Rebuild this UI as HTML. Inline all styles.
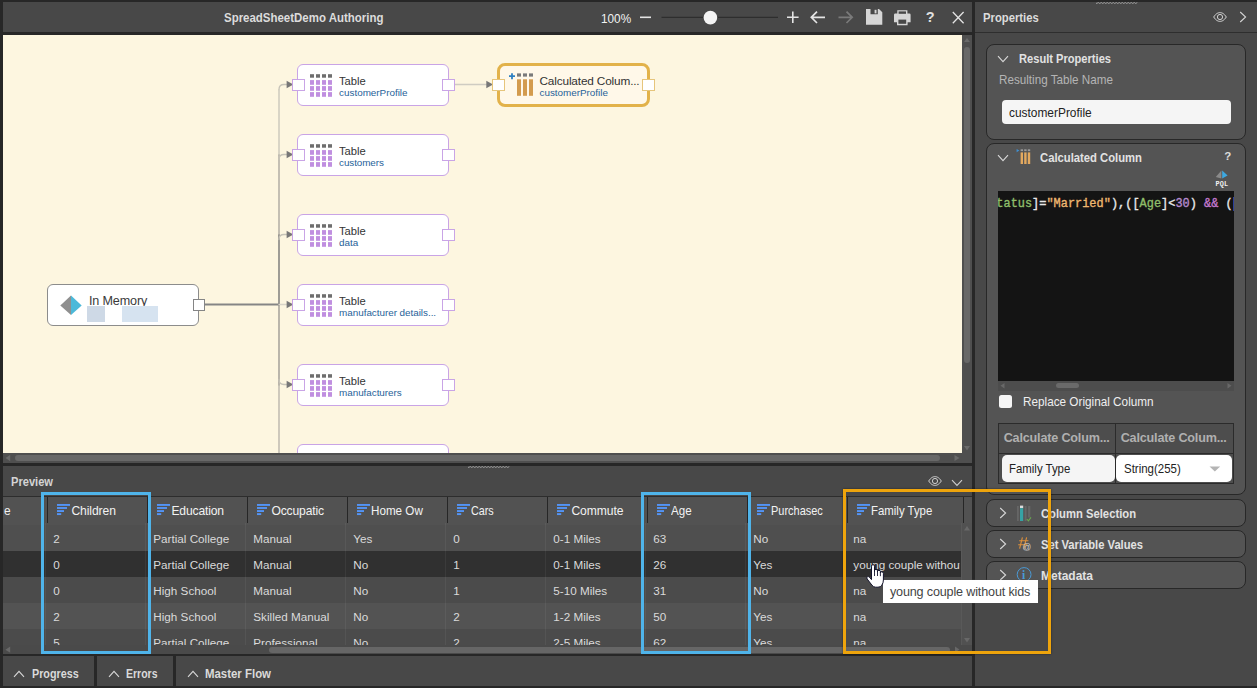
<!DOCTYPE html>
<html lang="en"><head><meta charset="utf-8"><title>SpreadSheetDemo Authoring</title>
<style>
*{box-sizing:border-box;margin:0;padding:0}
html,body{width:1257px;height:688px;overflow:hidden;background:#272727}
body{position:relative;font-family:"Liberation Sans",sans-serif;font-size:12px;color:#ddd}
.a,.t,svg{position:absolute}
.t{white-space:pre;line-height:20px;height:20px}
.panel{background:#484848}
.node{background:#fff;border:1px solid #c9a4e6;border-radius:6px}
.port{background:#fff;border:1px solid #c9a4e6}
.card{background:#545454;border:1px solid #282828;border-radius:8px}
</style></head>
<body>
<div class="a panel" style="left:3px;top:2px;width:969px;height:30px;"></div>
<span class="t" style="left:224.0px;top:8px;font-size:12.6px;font-weight:bold;transform:scaleX(0.9100);transform-origin:0 50%;color:#dcdcdc;">SpreadSheetDemo Authoring</span>
<span class="t" style="left:600.9px;top:9px;font-size:12.7px;transform:scaleX(0.9275);transform-origin:0 50%;color:#f2f2f2;">100%</span>
<svg style="left:590px;top:2px" width="382" height="30" viewBox="590 2 382 30" fill="none" stroke="#e4e4e4" stroke-width="1.6">
<path d="M640 17.3H651"/>
<path d="M661.5 17.3H778" stroke="#2e2e2e" stroke-width="1.2"/>
<circle cx="710.4" cy="17.6" r="6.8" fill="#f4f4f4" stroke="none"/>
<path d="M787 17.3H798.6M792.8 11.5V23.1"/>
<path d="M825 17.3H811.5M817 11.6L811.3 17.3L817 23" stroke-width="1.7"/>
<path d="M838.5 17.3H852M846.5 11.6L852.2 17.3L846.5 23" stroke="#7a7a7a" stroke-width="1.7"/>
<path d="M866 9H879L882.3 12.3V24.8H866Z M870.5 9V14.3H877.8V9Z M876.2 9.8V13.2" fill="#d6d6d6" stroke="none" fill-rule="evenodd"/>
<rect x="874.6" y="9.8" width="1.9" height="3.6" fill="#d6d6d6" stroke="none"/>
<path d="M897.3 10.2H907.4V13.4H909.3Q910.6 13.4 910.6 14.7V22.2H907.6V25.2H897V22.2H894V14.7Q894 13.4 895.3 13.4H897.3Z" fill="#d6d6d6" stroke="none"/>
<rect x="898.6" y="11.4" width="7.4" height="2.4" fill="#484848" stroke="none"/>
<rect x="898.4" y="19.6" width="7.8" height="4.2" fill="#484848" stroke="none"/>
<path d="M952.8 12L963.6 23.2M963.6 12L952.8 23.2" stroke-width="1.3"/>
</svg>
<span class="t" style="left:925.8px;top:7px;font-size:14.5px;font-weight:bold;color:#e0e0e0;">?</span>
<div class="a" style="left:3px;top:35px;width:959px;height:418px;background:#fdf6e0"></div>
<div class="a" style="left:962px;top:35px;width:10px;height:428px;background:#4f4f4f"></div>
<div class="a" style="left:3px;top:453px;width:969px;height:10px;background:#4f4f4f"></div>
<div class="a" style="left:964px;top:47px;width:6px;height:316px;background:#686868;border-radius:3px"></div>
<div class="a" style="left:15px;top:455px;width:925px;height:6px;background:#686868;border-radius:3px"></div>
<svg style="left:0;top:0" width="1257" height="688" fill="#6a6a6a">
<path d="M964 42L967 38L970 42Z"/><path d="M964 446L970 446L967 450.5Z"/>
<path d="M10.2 454.8L5.6 458L10.2 461.2Z"/><path d="M954.5 455L959.5 458L954.5 461Z"/>
</svg>
<svg style="left:3px;top:35px" width="959" height="418" viewBox="3 35 959 418" fill="none" stroke-linecap="round"><path d="M279 90V155" stroke="#c6c3b8" stroke-width="1.3"/><path d="M279 155V235" stroke="#b0ada4" stroke-width="1.5"/><path d="M279 235V304" stroke="#8e8c88" stroke-width="1.7"/><path d="M279 305V385" stroke="#a9a69e" stroke-width="1.6"/><path d="M279 385V453" stroke="#b9b6ac" stroke-width="1.4"/><path d="M204.5 304.5H279" stroke="#858585" stroke-width="2"/><path d="M279 89.5Q279 84.5 284 84.5H287" stroke="#c6c3b8" stroke-width="1.3"/><path d="M286.6 80.8L293.40000000000003 84.5L286.6 88.2Z" fill="#777" stroke="none"/><path d="M279 159.5Q279 154.5 284 154.5H287" stroke="#c6c3b8" stroke-width="1.3"/><path d="M286.6 150.8L293.40000000000003 154.5L286.6 158.2Z" fill="#777" stroke="none"/><path d="M279 239.5Q279 234.5 284 234.5H287" stroke="#c6c3b8" stroke-width="1.3"/><path d="M286.6 230.8L293.40000000000003 234.5L286.6 238.2Z" fill="#777" stroke="none"/><path d="M279 304.5H287" stroke="#d8d4c8" stroke-width="1.3"/><path d="M286.6 300.8L293.40000000000003 304.5L286.6 308.2Z" fill="#777" stroke="none"/><path d="M279 379.5Q279 384.5 284 384.5H287" stroke="#c6c3b8" stroke-width="1.3"/><path d="M286.6 380.8L293.40000000000003 384.5L286.6 388.2Z" fill="#777" stroke="none"/><path d="M454.5 84.5H487" stroke="#cfccc2" stroke-width="1.3"/><path d="M486.3 80.8L493.1 84.5L486.3 88.2Z" fill="#777" stroke="none"/></svg>
<div class="a node" style="left:297px;top:64px;width:152px;height:42px;"></div><div class="a port" style="left:292px;top:79px;width:13px;height:12px;"></div><div class="a port" style="left:442px;top:79px;width:13px;height:12px;"></div><svg style="left:310px;top:74px" width="22" height="23" viewBox="0 0 22 23"><rect x="0" y="0.2" width="4" height="3.5" fill="#6e6e6e"/><rect x="0" y="6.1" width="4" height="4.7" fill="#c08fe0"/><rect x="0" y="12.1" width="4" height="4.7" fill="#c08fe0"/><rect x="0" y="18.1" width="4" height="4.7" fill="#c08fe0"/><rect x="6" y="0.2" width="4" height="3.5" fill="#6e6e6e"/><rect x="6" y="6.1" width="4" height="4.7" fill="#c08fe0"/><rect x="6" y="12.1" width="4" height="4.7" fill="#c08fe0"/><rect x="6" y="18.1" width="4" height="4.7" fill="#c08fe0"/><rect x="12" y="0.2" width="4" height="3.5" fill="#6e6e6e"/><rect x="12" y="6.1" width="4" height="4.7" fill="#c08fe0"/><rect x="12" y="12.1" width="4" height="4.7" fill="#c08fe0"/><rect x="12" y="18.1" width="4" height="4.7" fill="#c08fe0"/><rect x="18" y="0.2" width="4" height="3.5" fill="#6e6e6e"/><rect x="18" y="6.1" width="4" height="4.7" fill="#c08fe0"/><rect x="18" y="12.1" width="4" height="4.7" fill="#c08fe0"/><rect x="18" y="18.1" width="4" height="4.7" fill="#c08fe0"/></svg><span class="t" style="left:338.9px;top:71px;font-size:11.8px;transform:scaleX(0.9502);transform-origin:0 50%;color:#333;">Table</span><span class="t" style="left:339.1px;top:83px;font-size:9.9px;letter-spacing:-0.014px;color:#1f6299;">customerProfile</span>
<div class="a node" style="left:297px;top:134px;width:152px;height:42px;"></div><div class="a port" style="left:292px;top:149px;width:13px;height:12px;"></div><div class="a port" style="left:442px;top:149px;width:13px;height:12px;"></div><svg style="left:310px;top:144px" width="22" height="23" viewBox="0 0 22 23"><rect x="0" y="0.2" width="4" height="3.5" fill="#6e6e6e"/><rect x="0" y="6.1" width="4" height="4.7" fill="#c08fe0"/><rect x="0" y="12.1" width="4" height="4.7" fill="#c08fe0"/><rect x="0" y="18.1" width="4" height="4.7" fill="#c08fe0"/><rect x="6" y="0.2" width="4" height="3.5" fill="#6e6e6e"/><rect x="6" y="6.1" width="4" height="4.7" fill="#c08fe0"/><rect x="6" y="12.1" width="4" height="4.7" fill="#c08fe0"/><rect x="6" y="18.1" width="4" height="4.7" fill="#c08fe0"/><rect x="12" y="0.2" width="4" height="3.5" fill="#6e6e6e"/><rect x="12" y="6.1" width="4" height="4.7" fill="#c08fe0"/><rect x="12" y="12.1" width="4" height="4.7" fill="#c08fe0"/><rect x="12" y="18.1" width="4" height="4.7" fill="#c08fe0"/><rect x="18" y="0.2" width="4" height="3.5" fill="#6e6e6e"/><rect x="18" y="6.1" width="4" height="4.7" fill="#c08fe0"/><rect x="18" y="12.1" width="4" height="4.7" fill="#c08fe0"/><rect x="18" y="18.1" width="4" height="4.7" fill="#c08fe0"/></svg><span class="t" style="left:338.9px;top:141px;font-size:11.8px;transform:scaleX(0.9502);transform-origin:0 50%;color:#333;">Table</span><span class="t" style="left:339.1px;top:153px;font-size:9.9px;letter-spacing:-0.094px;color:#1f6299;">customers</span>
<div class="a node" style="left:297px;top:214px;width:152px;height:42px;"></div><div class="a port" style="left:292px;top:229px;width:13px;height:12px;"></div><div class="a port" style="left:442px;top:229px;width:13px;height:12px;"></div><svg style="left:310px;top:224px" width="22" height="23" viewBox="0 0 22 23"><rect x="0" y="0.2" width="4" height="3.5" fill="#6e6e6e"/><rect x="0" y="6.1" width="4" height="4.7" fill="#c08fe0"/><rect x="0" y="12.1" width="4" height="4.7" fill="#c08fe0"/><rect x="0" y="18.1" width="4" height="4.7" fill="#c08fe0"/><rect x="6" y="0.2" width="4" height="3.5" fill="#6e6e6e"/><rect x="6" y="6.1" width="4" height="4.7" fill="#c08fe0"/><rect x="6" y="12.1" width="4" height="4.7" fill="#c08fe0"/><rect x="6" y="18.1" width="4" height="4.7" fill="#c08fe0"/><rect x="12" y="0.2" width="4" height="3.5" fill="#6e6e6e"/><rect x="12" y="6.1" width="4" height="4.7" fill="#c08fe0"/><rect x="12" y="12.1" width="4" height="4.7" fill="#c08fe0"/><rect x="12" y="18.1" width="4" height="4.7" fill="#c08fe0"/><rect x="18" y="0.2" width="4" height="3.5" fill="#6e6e6e"/><rect x="18" y="6.1" width="4" height="4.7" fill="#c08fe0"/><rect x="18" y="12.1" width="4" height="4.7" fill="#c08fe0"/><rect x="18" y="18.1" width="4" height="4.7" fill="#c08fe0"/></svg><span class="t" style="left:338.9px;top:221px;font-size:11.8px;transform:scaleX(0.9502);transform-origin:0 50%;color:#333;">Table</span><span class="t" style="left:339.1px;top:233px;font-size:9.9px;letter-spacing:-0.009px;color:#1f6299;">data</span>
<div class="a node" style="left:297px;top:284px;width:152px;height:42px;"></div><div class="a port" style="left:292px;top:299px;width:13px;height:12px;"></div><div class="a port" style="left:442px;top:299px;width:13px;height:12px;"></div><svg style="left:310px;top:294px" width="22" height="23" viewBox="0 0 22 23"><rect x="0" y="0.2" width="4" height="3.5" fill="#6e6e6e"/><rect x="0" y="6.1" width="4" height="4.7" fill="#c08fe0"/><rect x="0" y="12.1" width="4" height="4.7" fill="#c08fe0"/><rect x="0" y="18.1" width="4" height="4.7" fill="#c08fe0"/><rect x="6" y="0.2" width="4" height="3.5" fill="#6e6e6e"/><rect x="6" y="6.1" width="4" height="4.7" fill="#c08fe0"/><rect x="6" y="12.1" width="4" height="4.7" fill="#c08fe0"/><rect x="6" y="18.1" width="4" height="4.7" fill="#c08fe0"/><rect x="12" y="0.2" width="4" height="3.5" fill="#6e6e6e"/><rect x="12" y="6.1" width="4" height="4.7" fill="#c08fe0"/><rect x="12" y="12.1" width="4" height="4.7" fill="#c08fe0"/><rect x="12" y="18.1" width="4" height="4.7" fill="#c08fe0"/><rect x="18" y="0.2" width="4" height="3.5" fill="#6e6e6e"/><rect x="18" y="6.1" width="4" height="4.7" fill="#c08fe0"/><rect x="18" y="12.1" width="4" height="4.7" fill="#c08fe0"/><rect x="18" y="18.1" width="4" height="4.7" fill="#c08fe0"/></svg><span class="t" style="left:338.9px;top:291px;font-size:11.8px;transform:scaleX(0.9502);transform-origin:0 50%;color:#333;">Table</span><span class="t" style="left:339.1px;top:303px;font-size:9.9px;letter-spacing:-0.031px;color:#1f6299;">manufacturer details...</span>
<div class="a node" style="left:297px;top:364px;width:152px;height:42px;"></div><div class="a port" style="left:292px;top:379px;width:13px;height:12px;"></div><div class="a port" style="left:442px;top:379px;width:13px;height:12px;"></div><svg style="left:310px;top:374px" width="22" height="23" viewBox="0 0 22 23"><rect x="0" y="0.2" width="4" height="3.5" fill="#6e6e6e"/><rect x="0" y="6.1" width="4" height="4.7" fill="#c08fe0"/><rect x="0" y="12.1" width="4" height="4.7" fill="#c08fe0"/><rect x="0" y="18.1" width="4" height="4.7" fill="#c08fe0"/><rect x="6" y="0.2" width="4" height="3.5" fill="#6e6e6e"/><rect x="6" y="6.1" width="4" height="4.7" fill="#c08fe0"/><rect x="6" y="12.1" width="4" height="4.7" fill="#c08fe0"/><rect x="6" y="18.1" width="4" height="4.7" fill="#c08fe0"/><rect x="12" y="0.2" width="4" height="3.5" fill="#6e6e6e"/><rect x="12" y="6.1" width="4" height="4.7" fill="#c08fe0"/><rect x="12" y="12.1" width="4" height="4.7" fill="#c08fe0"/><rect x="12" y="18.1" width="4" height="4.7" fill="#c08fe0"/><rect x="18" y="0.2" width="4" height="3.5" fill="#6e6e6e"/><rect x="18" y="6.1" width="4" height="4.7" fill="#c08fe0"/><rect x="18" y="12.1" width="4" height="4.7" fill="#c08fe0"/><rect x="18" y="18.1" width="4" height="4.7" fill="#c08fe0"/></svg><span class="t" style="left:338.9px;top:371px;font-size:11.8px;transform:scaleX(0.9502);transform-origin:0 50%;color:#333;">Table</span><span class="t" style="left:339.1px;top:383px;font-size:9.9px;letter-spacing:-0.048px;color:#1f6299;">manufacturers</span>
<div class="a" style="left:3px;top:35px;width:959px;height:418px;overflow:hidden"><div class="a node" style="left:294px;top:409px;width:152px;height:42px;"></div></div>
<div class="a node" style="left:47px;top:284px;width:152px;height:42px;border-color:#8c8c8c"></div>
<div class="a port" style="left:192.5px;top:299px;width:12px;height:12px;border-color:#858585"></div>
<svg style="left:60px;top:295px" width="22" height="21" viewBox="0 0 22 21"><path d="M11 0.5L0.3 10.5L11 20Z" fill="#8f8f8f"/><path d="M11 0.5L21.7 10.5L11 20Z" fill="#4cb9d9"/></svg>
<span class="t" style="left:88.9px;top:291px;font-size:12.6px;letter-spacing:-0.143px;color:#3a3a3a;">In Memory</span>
<div class="a" style="left:87px;top:306px;width:18px;height:16px;background:#ceD9e6"></div>
<div class="a" style="left:122px;top:306px;width:36px;height:16px;background:#d6e3f0"></div>
<div class="a" style="left:496.5px;top:63px;width:153px;height:44px;background:#fff8e9;border:3px solid #e2b24a;border-radius:8px"></div>
<div class="a port" style="left:492px;top:79px;width:13px;height:12px;border-color:#e6c57c"></div>
<div class="a port" style="left:642px;top:79px;width:13px;height:12px;border-color:#e6c57c"></div>
<svg style="left:508px;top:72px" width="26" height="25" viewBox="508 72 26 25">
<path d="M509 76.2H515M512 73.2V79.2" stroke="#2f80c2" stroke-width="1.8" fill="none"/>
<rect x="517" y="73.4" width="4" height="3.2" fill="#7a7a7a"/><rect x="523" y="73.4" width="4" height="3.2" fill="#7a7a7a"/><rect x="529" y="73.4" width="4" height="3.2" fill="#7a7a7a"/>
<rect x="517" y="79.3" width="4" height="16.5" fill="#d39b4e"/><rect x="523" y="79.3" width="4" height="16.5" fill="#d39b4e"/><rect x="529" y="79.3" width="4" height="16.5" fill="#d39b4e"/>
</svg>
<span class="t" style="left:539.5px;top:71px;font-size:11.8px;letter-spacing:-0.155px;color:#333;">Calculated Colum...</span>
<span class="t" style="left:539.5px;top:83px;font-size:9.9px;letter-spacing:-0.014px;color:#1f6299;">customerProfile</span>
<div class="a panel" style="left:3px;top:466px;width:969px;height:188px;"></div>
<span class="t" style="left:11.2px;top:472px;font-size:12.6px;font-weight:bold;transform:scaleX(0.8822);transform-origin:0 50%;color:#d4d4d4;">Preview</span>
<svg style="left:468px;top:465px" width="42" height="4" viewBox="0 0 42 4"><path d="M0 1.5 L0.75 3L2.25 1L3.75 3L5.25 1L6.75 3L8.25 1L9.75 3L11.25 1L12.75 3L14.25 1L15.75 3L17.25 1L18.75 3L20.25 1L21.75 3L23.25 1L24.75 3L26.25 1L27.75 3L29.25 1L30.75 3L32.25 1L33.75 3L35.25 1L36.75 3L38.25 1L39.75 3L41.25 1" stroke="#9a9a9a" stroke-width="0.8" fill="none"/></svg>
<svg style="left:928px;top:476px" width="14" height="10" viewBox="0 0 14 10" fill="none" stroke="#cfcfcf" stroke-width="1"><path d="M0.7 5C3 1.4 5.3 0.6 7 0.6S11 1.4 13.3 5C11 8.6 8.7 9.4 7 9.4S3 8.6 0.7 5Z"/><circle cx="7" cy="5" r="2.6"/></svg>
<svg style="left:951px;top:479px" width="12" height="8" viewBox="0 0 12 8" fill="none" stroke="#cfcfcf" stroke-width="1.1"><path d="M1 1.2L6 6.4L11 1.2"/></svg>
<div class="a" style="left:3px;top:496px;width:969px;height:149px;overflow:hidden"><div class="a" style="left:0;top:0;width:969px;height:29px;background:#525252;border-top:1px solid #2d2d2d"></div><div class="a" style="left:0;top:29px;width:958px;height:26px;background:#4f4f4f"></div><div class="a" style="left:0;top:55px;width:958px;height:26px;background:#303030"></div><div class="a" style="left:0;top:81px;width:958px;height:26px;background:#4b4b4b"></div><div class="a" style="left:0;top:107px;width:958px;height:26px;background:#535353"></div><div class="a" style="left:0;top:133px;width:958px;height:16px;background:#4b4b4b"></div><div class="a" style="left:44px;top:1px;width:1px;height:26px;background:#262626"></div><div class="a" style="left:42px;top:27px;width:1px;height:122px;background:rgba(255,255,255,0.055)"></div><div class="a" style="left:144px;top:1px;width:1px;height:26px;background:#262626"></div><div class="a" style="left:142px;top:27px;width:1px;height:122px;background:rgba(255,255,255,0.055)"></div><div class="a" style="left:244px;top:1px;width:1px;height:26px;background:#262626"></div><div class="a" style="left:242px;top:27px;width:1px;height:122px;background:rgba(255,255,255,0.055)"></div><div class="a" style="left:344px;top:1px;width:1px;height:26px;background:#262626"></div><div class="a" style="left:342px;top:27px;width:1px;height:122px;background:rgba(255,255,255,0.055)"></div><div class="a" style="left:444px;top:1px;width:1px;height:26px;background:#262626"></div><div class="a" style="left:442px;top:27px;width:1px;height:122px;background:rgba(255,255,255,0.055)"></div><div class="a" style="left:544px;top:1px;width:1px;height:26px;background:#262626"></div><div class="a" style="left:542px;top:27px;width:1px;height:122px;background:rgba(255,255,255,0.055)"></div><div class="a" style="left:644px;top:1px;width:1px;height:26px;background:#262626"></div><div class="a" style="left:642px;top:27px;width:1px;height:122px;background:rgba(255,255,255,0.055)"></div><div class="a" style="left:744px;top:1px;width:1px;height:26px;background:#262626"></div><div class="a" style="left:742px;top:27px;width:1px;height:122px;background:rgba(255,255,255,0.055)"></div><div class="a" style="left:844px;top:1px;width:1px;height:26px;background:#262626"></div><div class="a" style="left:842px;top:27px;width:1px;height:122px;background:rgba(255,255,255,0.055)"></div></div>
<div class="a" style="left:963px;top:497px;width:1px;height:26px;background:#262626"></div>
<svg style="left:57px;top:504px" width="14" height="12" viewBox="0 0 14 12" fill="#5394f6"><rect x="0" y="0" width="13" height="1.9"/><rect x="0" y="3.05" width="10" height="1.9"/><rect x="0" y="6.1" width="7" height="1.9"/><rect x="0" y="9.15" width="4.2" height="1.9"/></svg>
<span class="t" style="left:71.4px;top:501px;font-size:12.1px;letter-spacing:-0.068px;color:#f2f2f2;">Children</span>
<svg style="left:157px;top:504px" width="14" height="12" viewBox="0 0 14 12" fill="#5394f6"><rect x="0" y="0" width="13" height="1.9"/><rect x="0" y="3.05" width="10" height="1.9"/><rect x="0" y="6.1" width="7" height="1.9"/><rect x="0" y="9.15" width="4.2" height="1.9"/></svg>
<span class="t" style="left:171.4px;top:501px;font-size:12.1px;letter-spacing:-0.144px;color:#f2f2f2;">Education</span>
<svg style="left:257px;top:504px" width="14" height="12" viewBox="0 0 14 12" fill="#5394f6"><rect x="0" y="0" width="13" height="1.9"/><rect x="0" y="3.05" width="10" height="1.9"/><rect x="0" y="6.1" width="7" height="1.9"/><rect x="0" y="9.15" width="4.2" height="1.9"/></svg>
<span class="t" style="left:271.4px;top:501px;font-size:12.1px;letter-spacing:-0.142px;color:#f2f2f2;">Occupatic</span>
<svg style="left:357px;top:504px" width="14" height="12" viewBox="0 0 14 12" fill="#5394f6"><rect x="0" y="0" width="13" height="1.9"/><rect x="0" y="3.05" width="10" height="1.9"/><rect x="0" y="6.1" width="7" height="1.9"/><rect x="0" y="9.15" width="4.2" height="1.9"/></svg>
<span class="t" style="left:371.4px;top:501px;font-size:12.1px;transform:scaleX(0.9634);transform-origin:0 50%;color:#f2f2f2;">Home Ow</span>
<svg style="left:457px;top:504px" width="14" height="12" viewBox="0 0 14 12" fill="#5394f6"><rect x="0" y="0" width="13" height="1.9"/><rect x="0" y="3.05" width="10" height="1.9"/><rect x="0" y="6.1" width="7" height="1.9"/><rect x="0" y="9.15" width="4.2" height="1.9"/></svg>
<span class="t" style="left:471.4px;top:501px;font-size:12.1px;transform:scaleX(0.8886);transform-origin:0 50%;color:#f2f2f2;">Cars</span>
<svg style="left:557px;top:504px" width="14" height="12" viewBox="0 0 14 12" fill="#5394f6"><rect x="0" y="0" width="13" height="1.9"/><rect x="0" y="3.05" width="10" height="1.9"/><rect x="0" y="6.1" width="7" height="1.9"/><rect x="0" y="9.15" width="4.2" height="1.9"/></svg>
<span class="t" style="left:571.4px;top:501px;font-size:12.1px;letter-spacing:-0.060px;color:#f2f2f2;">Commute</span>
<svg style="left:657px;top:504px" width="14" height="12" viewBox="0 0 14 12" fill="#5394f6"><rect x="0" y="0" width="13" height="1.9"/><rect x="0" y="3.05" width="10" height="1.9"/><rect x="0" y="6.1" width="7" height="1.9"/><rect x="0" y="9.15" width="4.2" height="1.9"/></svg>
<span class="t" style="left:671.4px;top:501px;font-size:12.1px;transform:scaleX(0.9567);transform-origin:0 50%;color:#f2f2f2;">Age</span>
<svg style="left:757px;top:504px" width="14" height="12" viewBox="0 0 14 12" fill="#5394f6"><rect x="0" y="0" width="13" height="1.9"/><rect x="0" y="3.05" width="10" height="1.9"/><rect x="0" y="6.1" width="7" height="1.9"/><rect x="0" y="9.15" width="4.2" height="1.9"/></svg>
<span class="t" style="left:771.4px;top:501px;font-size:12.1px;transform:scaleX(0.9065);transform-origin:0 50%;color:#f2f2f2;">Purchasec</span>
<svg style="left:857px;top:504px" width="14" height="12" viewBox="0 0 14 12" fill="#5394f6"><rect x="0" y="0" width="13" height="1.9"/><rect x="0" y="3.05" width="10" height="1.9"/><rect x="0" y="6.1" width="7" height="1.9"/><rect x="0" y="9.15" width="4.2" height="1.9"/></svg>
<span class="t" style="left:871.4px;top:501px;font-size:12.1px;transform:scaleX(0.9435);transform-origin:0 50%;color:#f2f2f2;">Family Type</span>
<span class="t" style="left:4.0px;top:501px;font-size:11.9px;color:#f0f0f0;">e</span>
<div class="a" style="left:3px;top:523px;width:958px;height:122px;overflow:hidden"><div class="a" style="left:47px;top:0;width:93px;height:122px;overflow:hidden"><span class="t" style="left:3.3px;top:6px;font-size:11.7px;color:#dadada;">2</span></div><div class="a" style="left:147px;top:0;width:93px;height:122px;overflow:hidden"><span class="t" style="left:3.3px;top:6px;font-size:11.7px;color:#dadada;">Partial College</span></div><div class="a" style="left:247px;top:0;width:93px;height:122px;overflow:hidden"><span class="t" style="left:3.3px;top:6px;font-size:11.7px;color:#dadada;">Manual</span></div><div class="a" style="left:347px;top:0;width:93px;height:122px;overflow:hidden"><span class="t" style="left:3.3px;top:6px;font-size:11.7px;color:#dadada;">Yes</span></div><div class="a" style="left:447px;top:0;width:93px;height:122px;overflow:hidden"><span class="t" style="left:3.3px;top:6px;font-size:11.7px;color:#dadada;">0</span></div><div class="a" style="left:547px;top:0;width:93px;height:122px;overflow:hidden"><span class="t" style="left:3.3px;top:6px;font-size:11.7px;color:#dadada;">0-1 Miles</span></div><div class="a" style="left:647px;top:0;width:93px;height:122px;overflow:hidden"><span class="t" style="left:3.3px;top:6px;font-size:11.7px;color:#dadada;">63</span></div><div class="a" style="left:747px;top:0;width:93px;height:122px;overflow:hidden"><span class="t" style="left:3.3px;top:6px;font-size:11.7px;color:#dadada;">No</span></div><div class="a" style="left:847px;top:0;width:110px;height:122px;overflow:hidden"><span class="t" style="left:3.3px;top:6px;font-size:11.7px;color:#dadada;">na</span></div><div class="a" style="left:47px;top:0;width:93px;height:122px;overflow:hidden"><span class="t" style="left:3.3px;top:32px;font-size:11.7px;color:#dadada;">0</span></div><div class="a" style="left:147px;top:0;width:93px;height:122px;overflow:hidden"><span class="t" style="left:3.3px;top:32px;font-size:11.7px;color:#dadada;">Partial College</span></div><div class="a" style="left:247px;top:0;width:93px;height:122px;overflow:hidden"><span class="t" style="left:3.3px;top:32px;font-size:11.7px;color:#dadada;">Manual</span></div><div class="a" style="left:347px;top:0;width:93px;height:122px;overflow:hidden"><span class="t" style="left:3.3px;top:32px;font-size:11.7px;color:#dadada;">No</span></div><div class="a" style="left:447px;top:0;width:93px;height:122px;overflow:hidden"><span class="t" style="left:3.3px;top:32px;font-size:11.7px;color:#dadada;">1</span></div><div class="a" style="left:547px;top:0;width:93px;height:122px;overflow:hidden"><span class="t" style="left:3.3px;top:32px;font-size:11.7px;color:#dadada;">0-1 Miles</span></div><div class="a" style="left:647px;top:0;width:93px;height:122px;overflow:hidden"><span class="t" style="left:3.3px;top:32px;font-size:11.7px;color:#dadada;">26</span></div><div class="a" style="left:747px;top:0;width:93px;height:122px;overflow:hidden"><span class="t" style="left:3.3px;top:32px;font-size:11.7px;color:#dadada;">Yes</span></div><div class="a" style="left:847px;top:0;width:110px;height:122px;overflow:hidden"><span class="t" style="left:3.3px;top:32px;font-size:11.7px;color:#dadada;">young couple without kids</span></div><div class="a" style="left:47px;top:0;width:93px;height:122px;overflow:hidden"><span class="t" style="left:3.3px;top:58px;font-size:11.7px;color:#dadada;">0</span></div><div class="a" style="left:147px;top:0;width:93px;height:122px;overflow:hidden"><span class="t" style="left:3.3px;top:58px;font-size:11.7px;color:#dadada;">High School</span></div><div class="a" style="left:247px;top:0;width:93px;height:122px;overflow:hidden"><span class="t" style="left:3.3px;top:58px;font-size:11.7px;color:#dadada;">Manual</span></div><div class="a" style="left:347px;top:0;width:93px;height:122px;overflow:hidden"><span class="t" style="left:3.3px;top:58px;font-size:11.7px;color:#dadada;">No</span></div><div class="a" style="left:447px;top:0;width:93px;height:122px;overflow:hidden"><span class="t" style="left:3.3px;top:58px;font-size:11.7px;color:#dadada;">1</span></div><div class="a" style="left:547px;top:0;width:93px;height:122px;overflow:hidden"><span class="t" style="left:3.3px;top:58px;font-size:11.7px;color:#dadada;">5-10 Miles</span></div><div class="a" style="left:647px;top:0;width:93px;height:122px;overflow:hidden"><span class="t" style="left:3.3px;top:58px;font-size:11.7px;color:#dadada;">31</span></div><div class="a" style="left:747px;top:0;width:93px;height:122px;overflow:hidden"><span class="t" style="left:3.3px;top:58px;font-size:11.7px;color:#dadada;">No</span></div><div class="a" style="left:847px;top:0;width:110px;height:122px;overflow:hidden"><span class="t" style="left:3.3px;top:58px;font-size:11.7px;color:#dadada;">na</span></div><div class="a" style="left:47px;top:0;width:93px;height:122px;overflow:hidden"><span class="t" style="left:3.3px;top:84px;font-size:11.7px;color:#dadada;">2</span></div><div class="a" style="left:147px;top:0;width:93px;height:122px;overflow:hidden"><span class="t" style="left:3.3px;top:84px;font-size:11.7px;color:#dadada;">High School</span></div><div class="a" style="left:247px;top:0;width:93px;height:122px;overflow:hidden"><span class="t" style="left:3.3px;top:84px;font-size:11.7px;color:#dadada;">Skilled Manual</span></div><div class="a" style="left:347px;top:0;width:93px;height:122px;overflow:hidden"><span class="t" style="left:3.3px;top:84px;font-size:11.7px;color:#dadada;">No</span></div><div class="a" style="left:447px;top:0;width:93px;height:122px;overflow:hidden"><span class="t" style="left:3.3px;top:84px;font-size:11.7px;color:#dadada;">2</span></div><div class="a" style="left:547px;top:0;width:93px;height:122px;overflow:hidden"><span class="t" style="left:3.3px;top:84px;font-size:11.7px;color:#dadada;">1-2 Miles</span></div><div class="a" style="left:647px;top:0;width:93px;height:122px;overflow:hidden"><span class="t" style="left:3.3px;top:84px;font-size:11.7px;color:#dadada;">50</span></div><div class="a" style="left:747px;top:0;width:93px;height:122px;overflow:hidden"><span class="t" style="left:3.3px;top:84px;font-size:11.7px;color:#dadada;">Yes</span></div><div class="a" style="left:847px;top:0;width:110px;height:122px;overflow:hidden"><span class="t" style="left:3.3px;top:84px;font-size:11.7px;color:#dadada;">na</span></div><div class="a" style="left:47px;top:0;width:93px;height:122px;overflow:hidden"><span class="t" style="left:3.3px;top:110px;font-size:11.7px;color:#dadada;">5</span></div><div class="a" style="left:147px;top:0;width:93px;height:122px;overflow:hidden"><span class="t" style="left:3.3px;top:110px;font-size:11.7px;color:#dadada;">Partial College</span></div><div class="a" style="left:247px;top:0;width:93px;height:122px;overflow:hidden"><span class="t" style="left:3.3px;top:110px;font-size:11.7px;color:#dadada;">Professional</span></div><div class="a" style="left:347px;top:0;width:93px;height:122px;overflow:hidden"><span class="t" style="left:3.3px;top:110px;font-size:11.7px;color:#dadada;">No</span></div><div class="a" style="left:447px;top:0;width:93px;height:122px;overflow:hidden"><span class="t" style="left:3.3px;top:110px;font-size:11.7px;color:#dadada;">2</span></div><div class="a" style="left:547px;top:0;width:93px;height:122px;overflow:hidden"><span class="t" style="left:3.3px;top:110px;font-size:11.7px;color:#dadada;">2-5 Miles</span></div><div class="a" style="left:647px;top:0;width:93px;height:122px;overflow:hidden"><span class="t" style="left:3.3px;top:110px;font-size:11.7px;color:#dadada;">62</span></div><div class="a" style="left:747px;top:0;width:93px;height:122px;overflow:hidden"><span class="t" style="left:3.3px;top:110px;font-size:11.7px;color:#dadada;">Yes</span></div><div class="a" style="left:847px;top:0;width:110px;height:122px;overflow:hidden"><span class="t" style="left:3.3px;top:110px;font-size:11.7px;color:#dadada;">na</span></div></div>
<div class="a" style="left:3px;top:645px;width:969px;height:9px;background:#4a4a4a"></div>
<div class="a" style="left:961px;top:523px;width:11px;height:122px;background:#515151;border-left:1px solid #595959"></div>
<div class="a" style="left:269px;top:647px;width:681px;height:5.6px;background:#666;border-radius:3px"></div>
<svg style="left:0;top:0" width="1257" height="688" fill="#686868">
<path d="M964 530.5L967 526L970 530.5Z"/><path d="M964 638L970 638L967 642.5Z"/>
<path d="M10.2 646.6L5.4 649.7L10.2 652.8Z"/><path d="M955 646.5L959.5 649.5L955 652.5Z"/>
</svg>
<div class="a panel" style="left:3px;top:656px;width:91px;height:30px;"></div>
<div class="a panel" style="left:97px;top:656px;width:76px;height:30px;"></div>
<div class="a panel" style="left:176px;top:656px;width:796px;height:30px;"></div>
<svg style="left:13px;top:670px" width="12" height="8" viewBox="0 0 12 8" fill="none" stroke="#d8d8d8" stroke-width="1.1"><path d="M1 6.8L6 1.4L11 6.8"/></svg>
<span class="t" style="left:32.2px;top:664px;font-size:12.6px;font-weight:bold;transform:scaleX(0.8552);transform-origin:0 50%;color:#dadada;">Progress</span>
<svg style="left:107.5px;top:670px" width="12" height="8" viewBox="0 0 12 8" fill="none" stroke="#d8d8d8" stroke-width="1.1"><path d="M1 6.8L6 1.4L11 6.8"/></svg>
<span class="t" style="left:126.0px;top:664px;font-size:12.6px;font-weight:bold;transform:scaleX(0.8331);transform-origin:0 50%;color:#dadada;">Errors</span>
<svg style="left:187px;top:670px" width="12" height="8" viewBox="0 0 12 8" fill="none" stroke="#d8d8d8" stroke-width="1.1"><path d="M1 6.8L6 1.4L11 6.8"/></svg>
<span class="t" style="left:204.9px;top:664px;font-size:12.6px;font-weight:bold;transform:scaleX(0.9068);transform-origin:0 50%;color:#dadada;">Master Flow</span>
<div class="a panel" style="left:975px;top:2px;width:282px;height:684px;"></div>
<div class="a" style="left:975px;top:32px;width:282px;height:1px;background:#2e2e2e"></div>
<span class="t" style="left:983.4px;top:8px;font-size:12.6px;font-weight:bold;transform:scaleX(0.8941);transform-origin:0 50%;color:#dcdcdc;">Properties</span>
<svg style="left:1096px;top:1px" width="42" height="4" viewBox="0 0 42 4"><path d="M0 1.5 L0.75 3L2.25 1L3.75 3L5.25 1L6.75 3L8.25 1L9.75 3L11.25 1L12.75 3L14.25 1L15.75 3L17.25 1L18.75 3L20.25 1L21.75 3L23.25 1L24.75 3L26.25 1L27.75 3L29.25 1L30.75 3L32.25 1L33.75 3L35.25 1L36.75 3L38.25 1L39.75 3L41.25 1" stroke="#9a9a9a" stroke-width="0.8" fill="none"/></svg>
<svg style="left:1213px;top:12px" width="14" height="10" viewBox="0 0 14 10" fill="none" stroke="#d4d4d4" stroke-width="1"><path d="M0.7 5C3 1.4 5.3 0.6 7 0.6S11 1.4 13.3 5C11 8.6 8.7 9.4 7 9.4S3 8.6 0.7 5Z"/><circle cx="7" cy="5" r="2.6"/></svg>
<svg style="left:1239px;top:11px" width="8" height="12" viewBox="0 0 8 12" fill="none" stroke="#d4d4d4" stroke-width="1.1"><path d="M1.2 1L6.6 6L1.2 11"/></svg>
<div class="a card" style="left:986px;top:44px;width:260px;height:95.5px;"></div>
<svg style="left:996.5px;top:54.5px" width="12" height="8" viewBox="0 0 12 8" fill="none" stroke="#d8d8d8" stroke-width="1.1"><path d="M1 1.2L6 6.6L11 1.2"/></svg>
<span class="t" style="left:1018.7px;top:49px;font-size:12.6px;font-weight:bold;transform:scaleX(0.8822);transform-origin:0 50%;color:#e2e2e2;">Result Properties</span>
<span class="t" style="left:998.8px;top:70px;font-size:12.6px;transform:scaleX(0.9269);transform-origin:0 50%;color:#b4b4b4;">Resulting Table Name</span>
<div class="a" style="left:1002px;top:100px;width:228.5px;height:24px;background:#f5f5f5;border-radius:4px"></div>
<span class="t" style="left:1008.6px;top:103px;font-size:12.6px;transform:scaleX(0.9451);transform-origin:0 50%;color:#222;">customerProfile</span>
<div class="a card" style="left:986px;top:143px;width:260px;height:352px;"></div>
<svg style="left:997px;top:153.5px" width="12" height="8" viewBox="0 0 12 8" fill="none" stroke="#d8d8d8" stroke-width="1.1"><path d="M1 1.2L6 6.6L11 1.2"/></svg>
<svg style="left:1016px;top:148px" width="16" height="17" viewBox="1016 148 16 17">
<path d="M1016.6 149L1019.4 150.6L1016.6 152.2Z" fill="#3f8fd0"/>
<rect x="1020.6" y="149.3" width="2.4" height="1.8" fill="#9a9a9a"/><rect x="1024.2" y="149.3" width="2.4" height="1.8" fill="#9a9a9a"/><rect x="1027.8" y="149.3" width="2.4" height="1.8" fill="#9a9a9a"/>
<rect x="1020.6" y="152.4" width="2.4" height="11.6" fill="#e3a95f"/><rect x="1024.2" y="152.4" width="2.4" height="11.6" fill="#e3a95f"/><rect x="1027.8" y="152.4" width="2.4" height="11.6" fill="#e3a95f"/>
</svg>
<span class="t" style="left:1040.0px;top:148px;font-size:12.6px;font-weight:bold;transform:scaleX(0.8942);transform-origin:0 50%;color:#e2e2e2;">Calculated Column</span>
<span class="t" style="left:1224.2px;top:146px;font-size:11.5px;font-weight:bold;color:#dcdcdc;">?</span>
<svg style="left:1215px;top:170px" width="14" height="9" viewBox="0 0 14 9"><path d="M6.4 0.4V8.4L0.8 7Z" fill="#8a8a8a"/><path d="M7.2 0.4L12.6 5.6L7.2 8.4Z" fill="#3da8e0"/></svg>
<span class="t" style="left:1215.6px;top:174px;font-size:6.8px;font-weight:bold;font-family:'Liberation Mono', monospace;letter-spacing:0.117px;color:#f0f0f0;">PQL</span>
<div class="a" style="left:998px;top:191px;width:236px;height:190px;background:#141414"></div>
<div class="a" style="left:998px;top:191px;width:236px;height:190px;overflow:hidden"><span class="t" style="left:-1.7px;top:3px;font-size:11.9px;font-family:'Liberation Mono', monospace;letter-spacing:0.026px;color:#8fbf6a;-webkit-text-stroke:0.35px #8fbf6a;">tatus</span><span class="t" style="left:34.1px;top:3px;font-size:11.9px;font-family:'Liberation Mono', monospace;letter-spacing:0.023px;color:#e8e8e8;-webkit-text-stroke:0.35px #e8e8e8;">]=</span><span class="t" style="left:48.4px;top:3px;font-size:11.9px;font-family:'Liberation Mono', monospace;letter-spacing:0.026px;color:#efb770;-webkit-text-stroke:0.35px #efb770;">&quot;Married&quot;</span><span class="t" style="left:112.9px;top:3px;font-size:11.9px;font-family:'Liberation Mono', monospace;letter-spacing:0.027px;color:#e8e8e8;-webkit-text-stroke:0.35px #e8e8e8;">),([</span><span class="t" style="left:141.6px;top:3px;font-size:11.9px;font-family:'Liberation Mono', monospace;letter-spacing:0.023px;color:#8fbf6a;-webkit-text-stroke:0.35px #8fbf6a;">Age</span><span class="t" style="left:163.1px;top:3px;font-size:11.9px;font-family:'Liberation Mono', monospace;letter-spacing:0.023px;color:#e8e8e8;-webkit-text-stroke:0.35px #e8e8e8;">]&lt;</span><span class="t" style="left:177.4px;top:3px;font-size:11.9px;font-family:'Liberation Mono', monospace;letter-spacing:0.023px;color:#b78bd0;-webkit-text-stroke:0.35px #b78bd0;">30</span><span class="t" style="left:191.7px;top:3px;font-size:11.9px;font-family:'Liberation Mono', monospace;letter-spacing:0.023px;color:#e8e8e8;-webkit-text-stroke:0.35px #e8e8e8;">)</span><span class="t" style="left:206.0px;top:3px;font-size:11.9px;font-family:'Liberation Mono', monospace;letter-spacing:0.023px;color:#c57ad0;-webkit-text-stroke:0.35px #c57ad0;">&amp;&amp;</span><span class="t" style="left:220.4px;top:3px;font-size:11.9px;font-family:'Liberation Mono', monospace;letter-spacing:0.023px;color:#e8e8e8;-webkit-text-stroke:0.35px #e8e8e8;"> (</span><div class="a" style="left:234.6px;top:6px;width:2px;height:14px;background:#2b3f9a"></div></div>
<div class="a" style="left:998px;top:381px;width:236px;height:9.5px;background:#4d4d4d"></div>
<div class="a" style="left:1055.5px;top:382.8px;width:23px;height:5.6px;background:#6a6a6a;border-radius:3px"></div>
<svg style="left:998px;top:381px" width="236" height="10" viewBox="0 0 236 10" fill="#686868"><path d="M6.5 2L2.5 4.8L6.5 7.6Z"/><path d="M229.5 2L233.5 4.8L229.5 7.6Z"/></svg>
<div class="a" style="left:998.7px;top:394.8px;width:13.6px;height:13.6px;background:#f5f5f5;border-radius:2.5px"></div>
<span class="t" style="left:1022.8px;top:392px;font-size:12.6px;transform:scaleX(0.9329);transform-origin:0 50%;color:#efefef;">Replace Original Column</span>
<div class="a" style="left:998px;top:423px;width:235.5px;height:60.5px;border:1px solid #2b2b2b;background:#4d4d4d"></div>
<div class="a" style="left:998px;top:452.5px;width:235.5px;height:1px;background:#2b2b2b"></div>
<div class="a" style="left:1115px;top:423px;width:1px;height:60px;background:#2b2b2b"></div>
<span class="t" style="left:1003.7px;top:428px;font-size:12.6px;font-weight:bold;letter-spacing:-0.176px;color:#b0b0b0;">Calculate Colum...</span>
<span class="t" style="left:1120.7px;top:428px;font-size:12.6px;font-weight:bold;letter-spacing:-0.176px;color:#b0b0b0;">Calculate Colum...</span>
<div class="a" style="left:1002px;top:455px;width:112.8px;height:27px;background:#f5f5f5;border-radius:5px"></div>
<div class="a" style="left:1116.4px;top:455px;width:115.2px;height:27px;background:#fff;border-radius:5px"></div>
<span class="t" style="left:1008.7px;top:459px;font-size:12.6px;transform:scaleX(0.9061);transform-origin:0 50%;color:#222;">Family Type</span>
<span class="t" style="left:1123.5px;top:459px;font-size:12.6px;transform:scaleX(0.9115);transform-origin:0 50%;color:#222;">String(255)</span>
<svg style="left:1209px;top:465.6px" width="12" height="6" viewBox="0 0 12 6"><path d="M0.5 0.4H11.2L5.85 5.6Z" fill="#b4b4b4"/></svg>
<div class="a card" style="left:986px;top:499px;width:260px;height:28px;"></div>
<div class="a card" style="left:986px;top:530px;width:260px;height:28px;"></div>
<div class="a card" style="left:986px;top:561px;width:260px;height:28px;"></div>
<svg style="left:998.7px;top:507px" width="8" height="12" viewBox="0 0 8 12" fill="none" stroke="#d8d8d8" stroke-width="1.1"><path d="M1.2 1L6.6 6L1.2 11"/></svg>
<svg style="left:998.7px;top:538px" width="8" height="12" viewBox="0 0 8 12" fill="none" stroke="#d8d8d8" stroke-width="1.1"><path d="M1.2 1L6.6 6L1.2 11"/></svg>
<svg style="left:998.7px;top:569px" width="8" height="12" viewBox="0 0 8 12" fill="none" stroke="#d8d8d8" stroke-width="1.1"><path d="M1.2 1L6.6 6L1.2 11"/></svg>
<span class="t" style="left:1041.0px;top:504px;font-size:12.6px;font-weight:bold;transform:scaleX(0.8932);transform-origin:0 50%;color:#e2e2e2;">Column Selection</span>
<span class="t" style="left:1041.0px;top:535px;font-size:12.6px;font-weight:bold;transform:scaleX(0.8883);transform-origin:0 50%;color:#e2e2e2;">Set Variable Values</span>
<span class="t" style="left:1041.0px;top:566px;font-size:12.6px;font-weight:bold;transform:scaleX(0.9525);transform-origin:0 50%;color:#e2e2e2;">Metadata</span>
<svg style="left:1016px;top:504px" width="16" height="19" viewBox="1016 504 16 19">
<rect x="1017.2" y="506" width="1.4" height="15" fill="#6c6c6c"/>
<rect x="1020" y="505.6" width="3.2" height="2.6" fill="#dcdcdc"/><rect x="1020" y="508.2" width="3.2" height="12.8" fill="#36a3a5"/>
<rect x="1024.6" y="506" width="2" height="15" fill="#666"/><rect x="1028.1" y="506" width="2.2" height="11.6" fill="#666"/>
<path d="M1026.8 519L1028.4 520.8L1031 517.4" stroke="#6aa84f" stroke-width="1.1" fill="none"/></svg>
<svg style="left:1016px;top:535px" width="16" height="17" viewBox="1016 535 16 17" fill="none" stroke="#e0913a" stroke-width="1.1"><path d="M1022.4 537.4L1019.6 548.6M1026.6 537.4L1023.8 548.6M1019.2 540.8H1028.4M1018.2 544.8H1027.4"/></svg>
<span class="t" style="left:1022.6px;top:537px;font-size:8.6px;color:#d0d0d0;">@</span>
<svg style="left:1016px;top:566px" width="17" height="17" viewBox="1016 566 17 17" fill="none" stroke="#4a9ad6" stroke-width="1"><circle cx="1024.1" cy="574.5" r="6.9"/></svg>
<span class="t" style="left:1022.1px;top:565px;font-size:11.5px;font-weight:bold;font-family:'Liberation Serif', serif;color:#4a9ad6;">i</span>
<div class="a" style="left:41px;top:492px;width:110px;height:162px;border:3px solid #4fb4ea"></div>
<div class="a" style="left:641px;top:492px;width:110px;height:162px;border:3px solid #4fb4ea"></div>
<div class="a" style="left:843px;top:489px;width:208px;height:165px;border:3px solid #eea40c;box-shadow:0 0 2px rgba(0,0,0,.5)"></div>
<div class="a" style="left:883px;top:579.5px;width:155px;height:23.5px;background:#fff;box-shadow:0 0 1px #555"></div>
<span class="t" style="left:889.9px;top:582px;font-size:12.6px;letter-spacing:-0.157px;color:#444;">young couple without kids</span>
<svg style="left:864px;top:562px" width="22" height="28" viewBox="864 562 22 28">
<path d="M871.5 566.2Q871.5 564.6 873 564.6Q874.5 564.6 874.5 566.2V571.6V570.6Q874.6 569.4 876 569.4Q877.4 569.4 877.5 570.8V572V571.2Q877.8 570.2 879 570.3Q880.3 570.4 880.4 571.6V573V572.6Q880.8 571.6 881.9 571.8Q883.3 572 883.4 573.4V580Q883.4 583 881.8 585.2Q880.6 587.2 878 587.2H875.6Q873.4 587.2 871.8 585L867.2 579Q866.2 577.6 867.4 576.8Q868.6 576.2 869.6 577.4L871.5 579.6Z" fill="#fff" stroke="#14142c" stroke-width="1" stroke-linejoin="round"/>
<path d="M874.5 571V576M877.5 572V576M880.4 573V576.2" stroke="#14142c" stroke-width="0.9" fill="none"/>
</svg>
</body></html>
